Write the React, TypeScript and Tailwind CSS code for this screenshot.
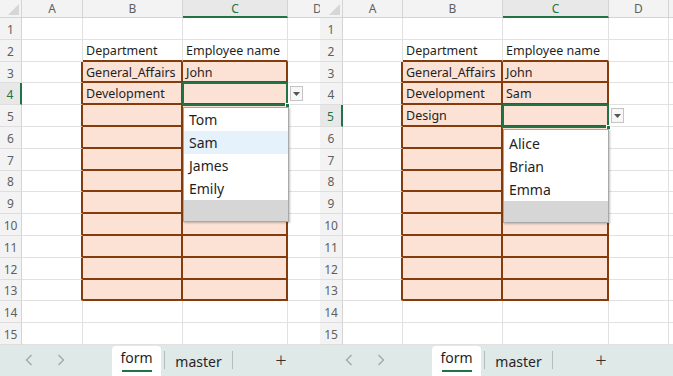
import React from 'react';

const ROW_H = 21.8;
const HEAD_H = 18;
const ROWS = Array.from({ length: 15 }, (_, i) => i + 1);

interface SheetProps {
  panelW: string;
  headW: string;
  colW: string[];
  headPx: number;
  colPx: number[];
  cells: Record<number, [string, string]>;
  selRow: number;
  items: string[];
  hot?: number;
  listGap: number;
}

function Sheet({ panelW, headW, colW, headPx, colPx, cells, selRow, items, hot, listGap }: SheetProps) {
  const letters = ['A', 'B', 'C', 'D', ''];

  // selection box around the active C cell
  const selLeft = headPx + colPx[0] + colPx[1] - 1;
  const selTop = HEAD_H + (selRow - 1) * ROW_H - 1;
  const selW = colPx[2] + 1;
  const selH = ROW_H + 2;

  return (
    <div className={`relative h-[376px] shrink-0 overflow-hidden bg-white ${panelW}`}>
      {/* column headers */}
      <div className="flex h-[18px]">
        <div className={`relative shrink-0 border-r border-b border-[#d4d4d4] bg-[#f3f3f3] ${headW}`}>
          <svg className="absolute right-[2px] bottom-[2px]" width="11" height="11" viewBox="0 0 11 11">
            <polygon points="11,0 11,11 0,11" fill="#d6d6d6" />
          </svg>
        </div>
        {letters.map((l, i) => (
          <div
            key={i}
            className={`flex shrink-0 items-center justify-center border-r pt-[1px] text-[12px] ${colW[i] ?? 'w-[60px]'} ${
              i === 2
                ? 'border-b-2 border-r-[#d4d4d4] border-b-[#217346] bg-[#e8e8e8] text-[#217346]'
                : 'border-b border-[#d4d4d4] bg-[#f3f3f3] text-[#5f5f5f]'
            }`}
          >
            {l}
          </div>
        ))}
      </div>

      {/* rows */}
      {ROWS.map((r) => {
        const inTable = r >= 3 && r <= 13;
        const vals = cells[r];
        return (
          <div key={r} className="flex h-[21.8px]">
            <div
              className={`flex shrink-0 items-center justify-center border-b border-b-[#dedede] pt-[3px] text-[12px] ${headW} ${
                r === selRow
                  ? 'border-r-2 border-r-[#217346] bg-[#e8e8e8] text-[#217346]'
                  : 'border-r border-r-[#d4d4d4] bg-[#f3f3f3] text-[#5f5f5f]'
              }`}
            >
              {r}
            </div>
            <div
              className={`shrink-0 border-b border-b-[#e1e1e1] ${colW[0]} ${
                inTable ? 'border-r-2 border-r-[#843c0c]' : 'border-r border-r-[#e1e1e1]'
              }`}
            />
            {[0, 1].map((k) => (
              <div
                key={k}
                className={`flex shrink-0 items-center overflow-hidden whitespace-nowrap pt-[3px] pl-[3px] text-[12.5px] text-[#1f1f1f] ${colW[k + 1]} ${
                  inTable
                    ? 'border-r-2 border-b-2 border-[#843c0c] bg-[#fbe2d5]'
                    : r === 2
                      ? 'border-r border-b-2 border-r-[#e1e1e1] border-b-[#843c0c]'
                      : 'border-r border-b border-[#e1e1e1]'
                }`}
              >
                {r === 2 ? (k === 0 ? 'Department' : 'Employee name') : vals ? vals[k] : ''}
              </div>
            ))}
            <div className={`shrink-0 border-r border-b border-[#e1e1e1] ${colW[3]}`} />
            <div className="w-[60px] shrink-0 border-r border-b border-[#e1e1e1]" />
          </div>
        );
      })}

      {/* sheet tabs */}
      <div className="flex h-[31px] items-stretch bg-[#dfe9e7] text-[14px]">
        <div className="flex w-[112px] shrink-0 items-center text-[#9aa3a2]">
          <svg className="ml-[25px]" width="8" height="12" viewBox="0 0 8 12">
            <polyline points="6.5,1 1.5,6 6.5,11" fill="none" stroke="#9ca5a4" strokeWidth="1.2" />
          </svg>
          <svg className="ml-[24px]" width="8" height="12" viewBox="0 0 8 12">
            <polyline points="1.5,1 6.5,6 1.5,11" fill="none" stroke="#9ca5a4" strokeWidth="1.2" />
          </svg>
        </div>
        <div className="mt-[1px] flex w-[49px] shrink-0 flex-col items-center rounded-t-[4px] bg-white">
          <span className="mt-[3px] leading-[18px] text-[#1f1f1f]">form</span>
          <span className="mt-[3px] h-[2px] w-[30px] bg-[#217346]" />
        </div>
        <div className="ml-[3px] h-[18px] w-px shrink-0 self-center bg-[#b3bdbb]" />
        <div className="flex w-[67px] shrink-0 items-center justify-center pt-[2px] text-[#262626]">master</div>
        <div className="h-[18px] w-px shrink-0 self-center bg-[#b3bdbb]" />
        <div className="flex w-[96px] shrink-0 items-center justify-center text-[20px] font-light text-[#333]">+</div>
      </div>

      {/* active cell */}
      <div
        className="absolute border-2 border-[#217346]"
        style={{ left: selLeft, top: selTop, width: selW, height: selH }}
      >
        <div className="absolute -right-[4px] -bottom-[4px] h-[5px] w-[5px] border border-white bg-[#217346]" />
      </div>

      {/* dropdown button */}
      <div
        className="absolute flex h-[15px] w-[13px] items-center justify-center border border-[#c4c4c4] bg-[#f7f7f7]"
        style={{ left: selLeft + selW + 2, top: selTop + 4 }}
      >
        <svg width="7" height="4" viewBox="0 0 7 4">
          <polygon points="0,0 7,0 3.5,4" fill="#555" />
        </svg>
      </div>

      {/* validation list */}
      <div
        className="absolute flex w-[106px] flex-col border border-[#a8a8a8] bg-white shadow-[1px_1px_2px_rgba(0,0,0,0.25)]"
        style={{ left: selLeft + 1, top: selTop + selH + 1, paddingTop: listGap }}
      >
        {items.map((it, i) => (
          <div
            key={it}
            className={`flex h-[23px] items-center pl-[5px] text-[14px] text-[#1f1f1f] ${i === hot ? 'bg-[#e5f1fb]' : ''}`}
          >
            {it}
          </div>
        ))}
        <div className="h-[21px] bg-[#d6d6d6]" />
      </div>
    </div>
  );
}

export default function App() {
  return (
    <div className="flex h-[376px] w-[673px] overflow-hidden bg-white font-['Noto_Sans',sans-serif]">
      <Sheet
        panelW="w-[320px]"
        headW="w-[22px]"
        colW={['w-[61px]', 'w-[100px]', 'w-[105px]', 'w-[60px]']}
        headPx={22}
        colPx={[61, 100, 105, 60]}
        cells={{ 3: ['General_Affairs', 'John'], 4: ['Development', ''] }}
        selRow={4}
        items={['Tom', 'Sam', 'James', 'Emily']}
        hot={1}
        listGap={0}
      />
      <Sheet
        panelW="w-[353px]"
        headW="w-[23px]"
        colW={['w-[60px]', 'w-[100px]', 'w-[106px]', 'w-[60px]']}
        headPx={23}
        colPx={[60, 100, 106, 60]}
        cells={{ 3: ['General_Affairs', 'John'], 4: ['Development', 'Sam'], 5: ['Design', ''] }}
        selRow={5}
        items={['Alice', 'Brian', 'Emma']}
        listGap={2}
      />
    </div>
  );
}
